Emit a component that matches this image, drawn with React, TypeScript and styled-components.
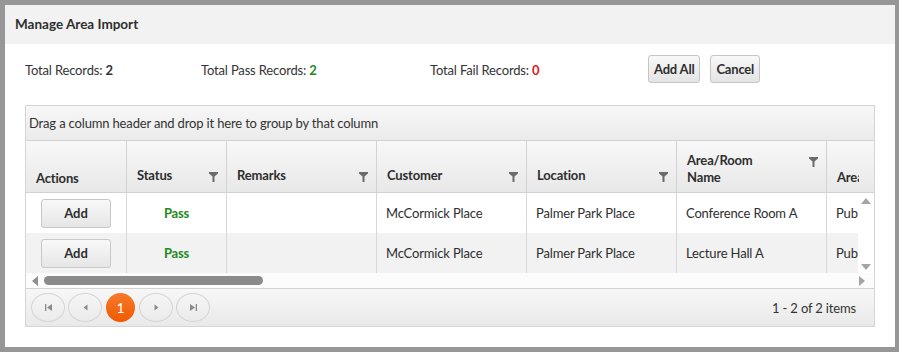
import React from "react";
import styled, { createGlobalStyle } from "styled-components";

const Global = createGlobalStyle`
  html, body { margin: 0; padding: 0; }
  body {
    background: #979797;
    font-family: Lato, "Open Sans", sans-serif;
    color: #333;
    width: 899px;
    height: 352px;
    overflow: hidden;
    letter-spacing: -0.16px;
  }
`;

const Backdrop = styled.div`
  width: 899px;
  height: 352px;
  padding: 5px 4px 5px 5px;
  box-sizing: border-box;
`;

const Dialog = styled.div`
  width: 890px;
  height: 342px;
  background: #fff;
  display: flex;
  flex-direction: column;
`;

const TitleBar = styled.div`
  height: 39px;
  background: #f2f2f2;
  display: flex;
  align-items: center;
  padding-left: 10px;
  padding-bottom: 1px;
  box-sizing: border-box;
  font-weight: 700;
  font-size: 13.5px;
  letter-spacing: 0;
  color: #2e2e2e;
`;

const Body = styled.div`
  padding: 0 20px;
  display: flex;
  flex-direction: column;
`;

const Summary = styled.div`
  height: 61px;
  display: flex;
  align-items: center;
  font-size: 13px;
  padding-bottom: 11px;
  box-sizing: border-box;
`;

const Stat = styled.div<{ $w: number }>`
  width: ${(p) => p.$w}px;
  color: #333;
  padding-top: 1px;
`;

const Num = styled.span<{ $c: string }>`
  color: ${(p) => p.$c};
  font-weight: 700;
`;

const Btn = styled.button`
  height: 28px;
  padding: 0 5px;
  margin-right: 10px;
  border: 1px solid #c5c5c5;
  border-radius: 3px;
  background: linear-gradient(#f8f8f8, #e4e4e4);
  font-family: inherit;
  font-weight: 700;
  font-size: 13px;
  letter-spacing: -0.2px;
  color: #2e2e2e;
`;

const Grid = styled.div`
  width: 850px;
  height: 222px;
  border: 1px solid #d5d5d5;
  box-sizing: border-box;
  display: flex;
  flex-direction: column;
  overflow: hidden;
`;

const GroupPanel = styled.div`
  height: 35px;
  flex: none;
  border-bottom: 1px solid #d2d2d2;
  background: linear-gradient(#f7f7f7, #ebebeb);
  display: flex;
  align-items: center;
  padding-left: 3px;
  font-size: 13px;
  box-sizing: border-box;
`;

const HeaderRow = styled.div`
  height: 52px;
  flex: none;
  display: flex;
  background: linear-gradient(#f8f8f8, #e8e8e8);
  border-bottom: 1px solid #d2d2d2;
  box-sizing: border-box;
`;

const HeaderCells = styled.div`
  width: 833px;
  display: flex;
  overflow: hidden;
`;

const HCell = styled.div<{ $w: number; $last?: boolean }>`
  width: ${(p) => p.$w}px;
  flex: none;
  box-sizing: border-box;
  border-right: ${(p) => (p.$last ? "none" : "1px solid #d2d2d2")};
  display: flex;
  flex-direction: column;
  justify-content: flex-end;
  padding: 0 8px 5px 10px;
  font-weight: 700;
  font-size: 13px;
  line-height: 17px;
  color: #2e2e2e;
  overflow: hidden;
  white-space: nowrap;
`;

const HText = styled.div<{ $pb: number }>`
  padding-bottom: ${(p) => p.$pb}px;
`;

const FilterIcon = styled.svg`
  float: right;
  width: 9px;
  height: 10px;
  margin-top: 5px;
`;

const Gutter = styled.div`
  width: 15px;
  flex: none;
`;

const RowsArea = styled.div`
  display: flex;
  height: 80px;
  flex: none;
`;

const Rows = styled.div`
  width: 833px;
  overflow: hidden;
  display: flex;
  flex-direction: column;
`;

const Row = styled.div<{ $alt?: boolean }>`
  height: 40px;
  display: flex;
  background: ${(p) => (p.$alt ? "#f2f2f2" : "#fff")};
`;

const Cell = styled.div<{ $w: number; $center?: boolean; $last?: boolean }>`
  width: ${(p) => p.$w}px;
  flex: none;
  box-sizing: border-box;
  border-right: ${(p) => (p.$last ? "none" : "1px solid #d8d8d8")};
  display: flex;
  align-items: center;
  justify-content: ${(p) => (p.$center ? "center" : "flex-start")};
  padding-left: ${(p) => (p.$center ? "0" : "9px")};
  font-size: 13px;
  white-space: nowrap;
  overflow: hidden;
  color: #2e2e2e;
`;

const AddBtn = styled.button`
  width: 70px;
  height: 29px;
  border: 1px solid #c8c8c8;
  border-radius: 3px;
  background: linear-gradient(#f8f8f8, #e6e6e6);
  font-family: inherit;
  font-weight: 700;
  font-size: 13px;
  color: #2e2e2e;
`;

const Pass = styled.span`
  color: #1d8a1d;
  font-weight: 700;
`;

const VScroll = styled.div`
  width: 16px;
  flex: none;
  display: flex;
  flex-direction: column;
  justify-content: space-between;
  align-items: center;
  padding: 4px 0 2px;
  box-sizing: border-box;
`;

const HScroll = styled.div`
  height: 16px;
  flex: none;
  display: flex;
  align-items: center;
  padding: 0 8px 0 5px;
  border-bottom: 1px solid #d2d2d2;
  background: #fcfcfc;
  box-sizing: border-box;
`;

const Thumb = styled.div`
  width: 219px;
  height: 9px;
  border-radius: 5px;
  background: #8b8b8b;
  margin-left: 5px;
`;

const Spacer = styled.div`
  flex: 1;
`;

const Pager = styled.div`
  flex: 1;
  display: flex;
  align-items: center;
  padding: 0 18px 0 5px;
  background: linear-gradient(#f7f7f7, #e9e9e9);
  font-size: 13px;
`;

const PageBtn = styled.div<{ $active?: boolean }>`
  width: ${(p) => (p.$active ? "29px" : "34px")};
  height: 29px;
  box-sizing: border-box;
  border-radius: 50%;
  border: ${(p) => (p.$active ? "none" : "1px solid #d4d4d4")};
  background: ${(p) => (p.$active ? "linear-gradient(#f77a2b, #f05a00)" : "transparent")};
  color: #fff;
  display: flex;
  align-items: center;
  justify-content: center;
  margin-left: ${(p) => (p.$active ? "1px" : "0")};
  margin-right: ${(p) => (p.$active ? "4px" : "3px")};
  font-size: 14px;
`;

const Info = styled.div`
  margin-left: auto;
  color: #333;
`;

const Arrow = ({ dir, color = "#a4a4a4" }: { dir: "up" | "down" | "left" | "right"; color?: string }) => {
  const pts = {
    up: "0,7 5,1 10,7",
    down: "0,1 10,1 5,7",
    left: "7,0 7,10 1,5",
    right: "1,0 1,10 7,5",
  }[dir];
  const vert = dir === "up" || dir === "down";
  return (
    <svg width={vert ? 10 : 8} height={vert ? 8 : 10} viewBox={vert ? "0 0 10 8" : "0 0 8 10"}>
      <polygon points={pts} fill={color} />
    </svg>
  );
};

const Filter = () => (
  <FilterIcon viewBox="0 0 9 10">
    <polygon points="0,0 9,0 9,1.5 5.5,4.5 5.5,10 3.5,10 3.5,4.5 0,1.5" fill="#6b6b6b" />
  </FilterIcon>
);

const PagerIcon = ({ kind }: { kind: "first" | "prev" | "next" | "last" }) => (
  <svg width="9" height="9" viewBox="0 0 9 9">
    {kind === "first" && (
      <>
        <rect x="1" y="1" width="1.3" height="7" fill="#8a8a8a" />
        <polygon points="8,1 8,8 3,4.5" fill="#8a8a8a" />
      </>
    )}
    {kind === "prev" && <polygon points="6.5,1.5 6.5,7.5 2.5,4.5" fill="#8a8a8a" />}
    {kind === "next" && <polygon points="2.5,1.5 2.5,7.5 6.5,4.5" fill="#8a8a8a" />}
    {kind === "last" && (
      <>
        <polygon points="1,1 1,8 6,4.5" fill="#8a8a8a" />
        <rect x="6.7" y="1" width="1.3" height="7" fill="#8a8a8a" />
      </>
    )}
  </svg>
);

const cols: { title: React.ReactNode; key: string; w: number; filter: boolean; pb: number }[] = [
  { key: "a", title: "Actions", w: 101, filter: false, pb: 0 },
  { key: "s", title: "Status", w: 100, filter: true, pb: 3 },
  { key: "r", title: "Remarks", w: 150, filter: true, pb: 3 },
  { key: "c", title: "Customer", w: 150, filter: true, pb: 3 },
  { key: "l", title: "Location", w: 150, filter: true, pb: 3 },
  {
    key: "n",
    title: (
      <>
        Area/Room
        <br />
        Name
      </>
    ),
    w: 150,
    filter: true,
    pb: 1,
  },
  { key: "t", title: "Area Type", w: 150, filter: true, pb: 1 },
];

const data = [
  { customer: "McCormick Place", location: "Palmer Park Place", room: "Conference Room A", type: "Public" },
  { customer: "McCormick Place", location: "Palmer Park Place", room: "Lecture Hall A", type: "Public" },
];

export default function App() {
  return (
    <>
      <Global />
      <Backdrop>
        <Dialog>
          <TitleBar>Manage Area Import</TitleBar>
          <Body>
            <Summary>
              <Stat $w={176}>
                Total Records: <Num $c="#333">2</Num>
              </Stat>
              <Stat $w={229}>
                Total Pass Records: <Num $c="#1d8a1d">2</Num>
              </Stat>
              <Stat $w={218}>
                Total Fail Records: <Num $c="#e8141b">0</Num>
              </Stat>
              <Btn>Add All</Btn>
              <Btn>Cancel</Btn>
            </Summary>
            <Grid>
              <GroupPanel>Drag a column header and drop it here to group by that column</GroupPanel>
              <HeaderRow>
                <HeaderCells>
                  {cols.map((c, i) => (
                    <HCell key={c.key} $w={c.w} $last={i === cols.length - 1}>
                      <HText $pb={c.pb}>
                        {c.filter && <Filter />}
                        {c.title}
                      </HText>
                    </HCell>
                  ))}
                </HeaderCells>
                <Gutter />
              </HeaderRow>
              <RowsArea>
                <Rows>
                  {data.map((r, i) => (
                    <Row key={i} $alt={i === 1}>
                      <Cell $w={101} $center>
                        <AddBtn>Add</AddBtn>
                      </Cell>
                      <Cell $w={100} $center>
                        <Pass>Pass</Pass>
                      </Cell>
                      <Cell $w={150} />
                      <Cell $w={150}>{r.customer}</Cell>
                      <Cell $w={150}>{r.location}</Cell>
                      <Cell $w={150}>{r.room}</Cell>
                      <Cell $w={150} $last>
                        {r.type}
                      </Cell>
                    </Row>
                  ))}
                </Rows>
                <VScroll>
                  <Arrow dir="up" />
                  <Arrow dir="down" />
                </VScroll>
              </RowsArea>
              <HScroll>
                <Arrow dir="left" color="#8e8e8e" />
                <Thumb />
                <Spacer />
                <Arrow dir="right" color="#a4a4a4" />
              </HScroll>
              <Pager>
                <PageBtn>
                  <PagerIcon kind="first" />
                </PageBtn>
                <PageBtn>
                  <PagerIcon kind="prev" />
                </PageBtn>
                <PageBtn $active>1</PageBtn>
                <PageBtn>
                  <PagerIcon kind="next" />
                </PageBtn>
                <PageBtn>
                  <PagerIcon kind="last" />
                </PageBtn>
                <Info>1 - 2 of 2 items</Info>
              </Pager>
            </Grid>
          </Body>
        </Dialog>
      </Backdrop>
    </>
  );
}
